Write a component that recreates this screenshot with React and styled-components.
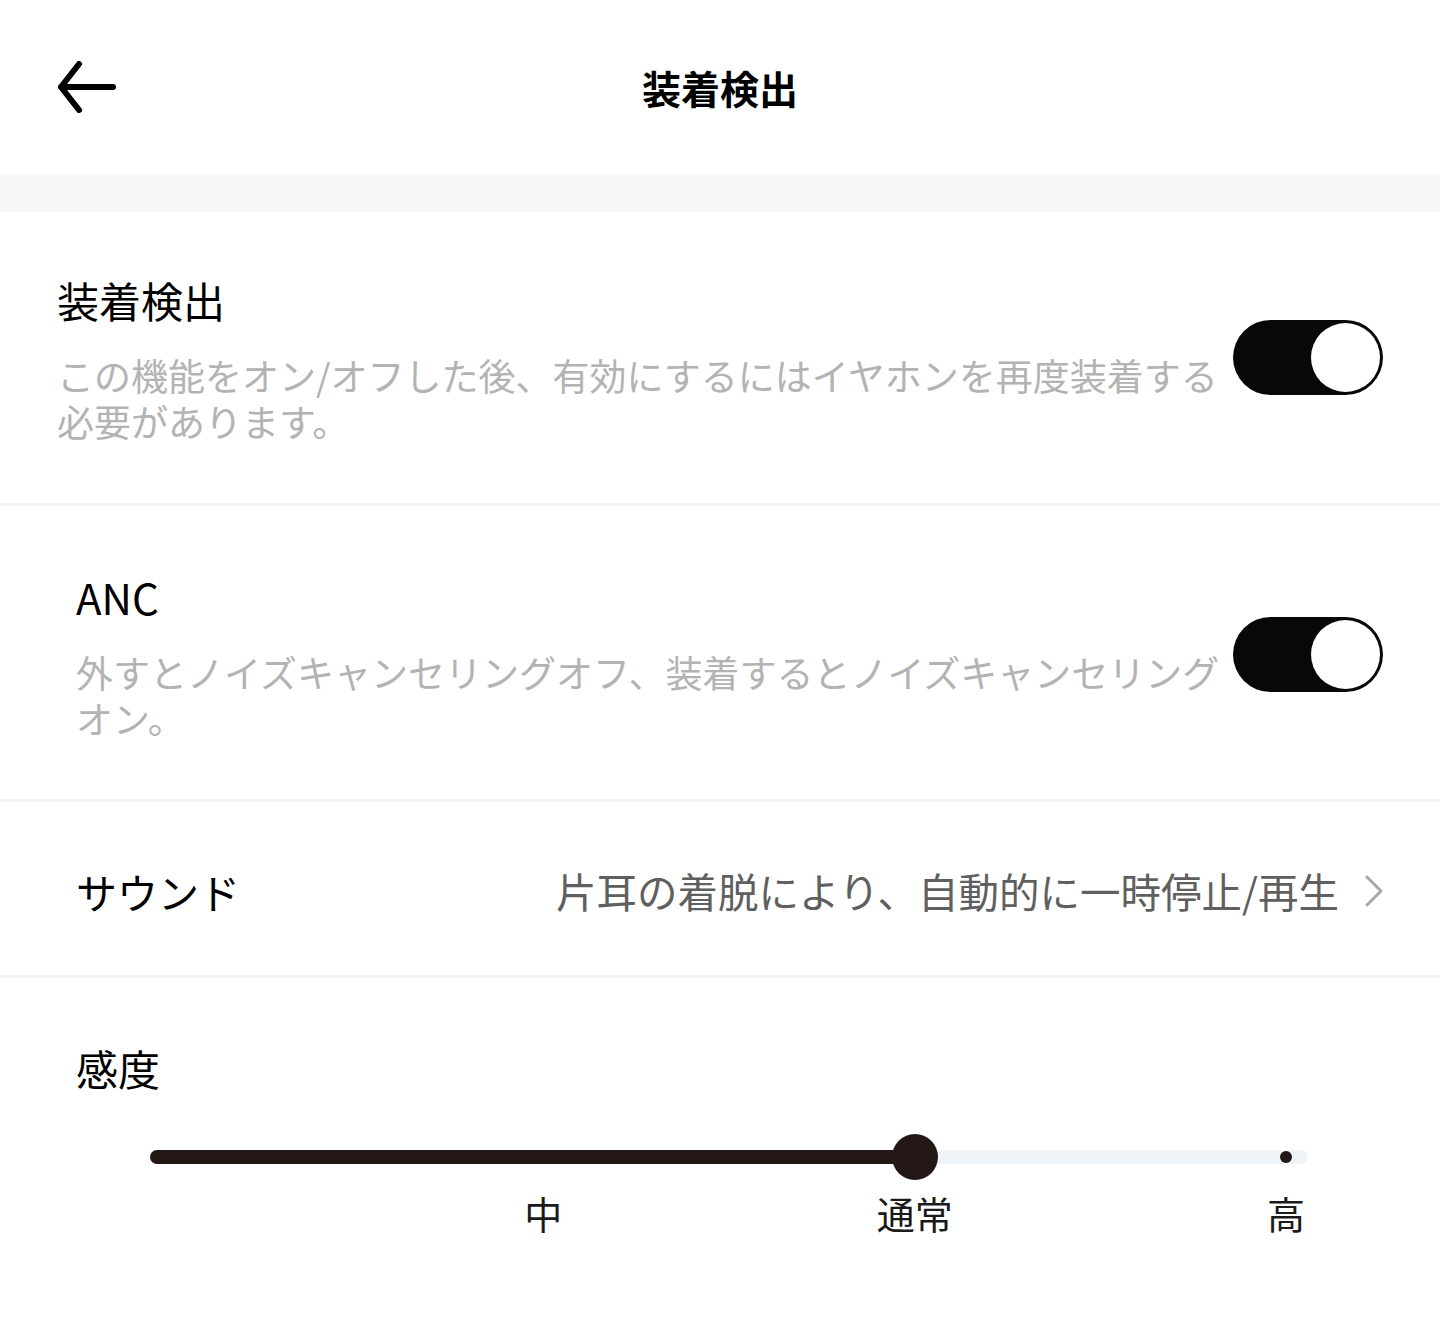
import styled, { createGlobalStyle } from 'styled-components';

const GlobalStyle = createGlobalStyle`
  body {
    margin: 0;
    background: #ffffff;
    font-family: "Noto Sans CJK JP", "Noto Sans", sans-serif;
  }
`;

const Page = styled.div`
  width: 1440px;
  min-height: 1333px;
  background: #ffffff;
`;

const Header = styled.header`
  height: 174px;
  display: grid;
  grid-template-columns: 1fr auto 1fr;
  align-items: center;
  padding: 0 57px;
  box-sizing: border-box;
`;

const BackButton = styled.button`
  justify-self: start;
  background: none;
  border: 0;
  padding: 0;
  width: 60px;
  height: 52px;
  display: flex;
  cursor: pointer;
`;

const Title = styled.h1`
  margin: 0;
  font-size: 39px;
  font-weight: 700;
  color: #000;
  line-height: 1;
`;

const Band = styled.div`
  height: 38px;
  background: #f7f7f7;
`;

const Section = styled.section`
  display: flex;
  align-items: center;
  gap: 4px;
  padding: ${(p) => p.$top || 58}px 57px ${(p) => p.$bottom || 58}px ${(p) => p.$indent || 76}px;
  border-bottom: 3px solid #f4f4f4;
`;

const TextBlock = styled.div`
  flex: 1;
  display: flex;
  flex-direction: column;
  gap: 23px;
`;

const ItemTitle = styled.div`
  font-size: 42px;
  line-height: 59px;
  color: #000;
`;

const Description = styled.div`
  font-size: 37px;
  line-height: 46px;
  color: #b3b3b3;
`;

const Toggle = styled.div`
  flex: none;
  width: 150px;
  height: 75px;
  border-radius: 38px;
  background: ${(p) => (p.$on ? '#080808' : '#d9d9d9')};
  display: flex;
  align-items: center;
  justify-content: ${(p) => (p.$on ? 'flex-end' : 'flex-start')};
  padding: 3px;
  box-sizing: border-box;
`;

const Knob = styled.div`
  width: 69px;
  height: 69px;
  border-radius: 50%;
  background: #ffffff;
`;

const LinkRow = styled.div`
  height: 176px;
  display: flex;
  align-items: center;
  justify-content: space-between;
  padding: 4px 57px 0 76px;
  box-sizing: border-box;
  border-bottom: 3px solid #f4f4f4;
`;

const RowLabel = styled.div`
  font-size: 41px;
  color: #000;
`;

const RowValue = styled.div`
  display: flex;
  align-items: center;
  gap: 26px;
  font-size: 40.5px;
  color: #5f5f5f;
`;

const SensSection = styled.section`
  padding: 60px 57px 0 76px;
`;

const Slider = styled.div`
  position: relative;
  margin: 37px 75px 0 74px;
  height: 46px;
  display: flex;
  align-items: center;
`;

const Track = styled.div`
  position: relative;
  width: 100%;
  height: 14px;
  border-radius: 7px;
  background: #eff4f8;
`;

const Fill = styled.div`
  height: 100%;
  border-radius: 7px;
  background: #231815;
`;

const Thumb = styled.div`
  position: absolute;
  top: 50%;
  width: 46px;
  height: 46px;
  border-radius: 50%;
  background: #231815;
  transform: translate(-50%, -50%);
`;

const Dot = styled.div`
  position: absolute;
  top: 50%;
  width: 12px;
  height: 12px;
  border-radius: 50%;
  background: #231815;
  transform: translate(-50%, -50%);
`;

const Labels = styled.div`
  position: relative;
  margin: 8px 75px 0 74px;
  height: 50px;
`;

const Mark = styled.span`
  position: absolute;
  top: 0;
  transform: translateX(-50%);
  font-size: 38px;
  line-height: 50px;
  color: #1a1a1a;
  white-space: nowrap;
`;

const BackArrow = () => (
  <svg width="60" height="52" viewBox="0 0 60 52" fill="none">
    <path d="M22 3 L4 26 L22 49 M4 26 H56" stroke="#000" strokeWidth="6" strokeLinecap="round" strokeLinejoin="round" />
  </svg>
);

const Chevron = () => (
  <svg width="18" height="32" viewBox="0 0 18 32" fill="none">
    <path d="M2 2 L16 16 L2 30" stroke="#a8a8a8" strokeWidth="3" strokeLinecap="round" strokeLinejoin="round" />
  </svg>
);

// track spans 1158px, ticks 22px in from each end
const TRACK = 1158;
const INSET = 22;
const ticks = [
  { label: '' },
  { label: '中' },
  { label: '通常' },
  { label: '高' },
];
const current = 2;
const tickX = (i) => INSET + ((TRACK - INSET * 2) * i) / (ticks.length - 1);

const App = () => (
  <Page>
    <GlobalStyle />
    <Header>
      <BackButton aria-label="back">
        <BackArrow />
      </BackButton>
      <Title>装着検出</Title>
      <div />
    </Header>
    <Band />
    <Section $indent={57} $bottom={59}>
      <TextBlock>
        <ItemTitle>装着検出</ItemTitle>
        <Description>
          この機能をオン/オフした後、有効にするにはイヤホンを再度装着する必要があります。
        </Description>
      </TextBlock>
      <Toggle $on>
        <Knob />
      </Toggle>
    </Section>
    <Section $top={61} $bottom={58}>
      <TextBlock>
        <ItemTitle>ANC</ItemTitle>
        <Description>
          外すとノイズキャンセリングオフ、装着するとノイズキャンセリングオン。
        </Description>
      </TextBlock>
      <Toggle $on>
        <Knob />
      </Toggle>
    </Section>
    <LinkRow>
      <RowLabel>サウンド</RowLabel>
      <RowValue>
        片耳の着脱により、自動的に一時停止/再生
        <Chevron />
      </RowValue>
    </LinkRow>
    <SensSection>
      <ItemTitle>感度</ItemTitle>
      <Slider>
        <Track>
          <Fill style={{ width: tickX(current) }} />
        </Track>
        {ticks.map((t, i) =>
          i > current ? <Dot key={i} style={{ left: tickX(i) }} /> : null
        )}
        <Thumb style={{ left: tickX(current) }} />
      </Slider>
      <Labels>
        {ticks.map((t, i) => (
          <Mark key={i} style={{ left: tickX(i) }}>
            {t.label}
          </Mark>
        ))}
      </Labels>
    </SensSection>
  </Page>
);

export default App;
